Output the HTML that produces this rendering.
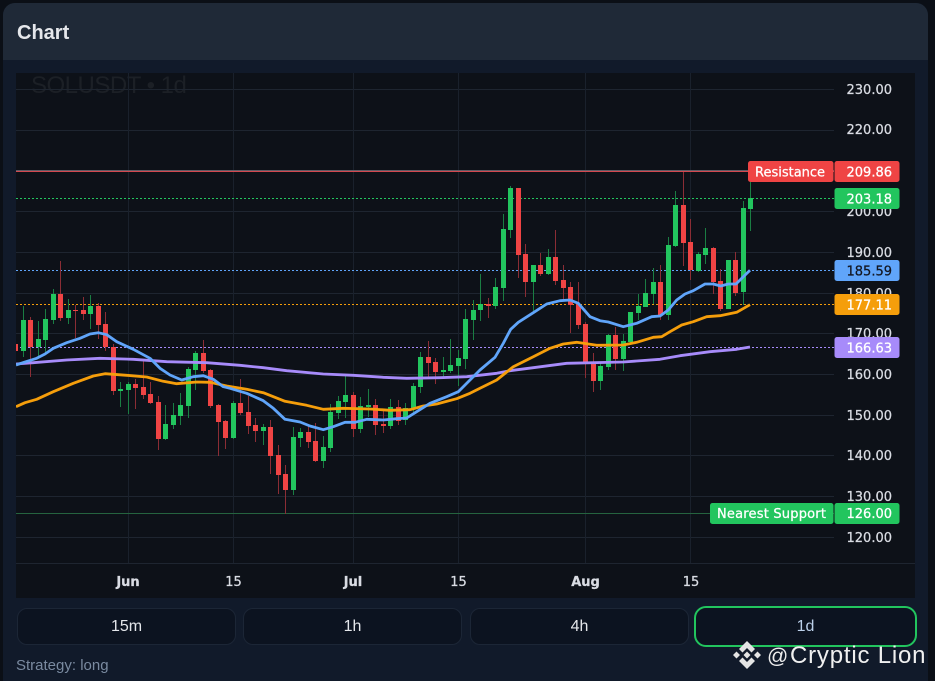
<!DOCTYPE html>
<html><head><meta charset="utf-8"><title>Chart</title>
<style>
html,body{margin:0;padding:0;background:#0b0f16;width:935px;height:681px;overflow:hidden;}
body{position:relative;font-family:"Liberation Sans",sans-serif;}
.card{position:absolute;left:3px;top:3px;width:925px;height:678px;background:#111a2a;border-radius:12px 12px 0 0;overflow:hidden;}
.head{position:absolute;left:0;top:0;width:925px;height:57px;background:#1f2937;}
.title{position:absolute;left:17px;top:23px;font:bold 20px "Liberation Sans",sans-serif;color:#e5e7eb;line-height:20px;}
.chart{position:absolute;left:16px;top:73px;width:899px;height:525px;background:#0d1118;}
.btn{position:absolute;top:608px;height:35px;width:217px;background:#0c1320;border:1px solid #1c2636;border-radius:10px;color:#e5e7eb;font:16px/35px "Liberation Sans",sans-serif;text-align:center;}
.on{top:606px;left:694px;width:219px;height:37px;border:2px solid #22c55e;border-radius:12px;color:#bcd0ea;line-height:37px;}
.strat{position:absolute;left:16px;top:658px;font:15px/16px "Liberation Sans",sans-serif;color:#7a8aa0;}
svg{position:absolute;left:0;top:0;}
svg text{font-family:"DejaVu Sans",sans-serif;font-size:13px;stroke-width:.25px;}
</style></head><body>
<div class="card"><div class="head"></div></div>
<div class="title">Chart</div>
<div class="chart"></div>
<svg width="935" height="681" viewBox="0 0 935 681">
<defs><clipPath id="c"><rect x="16" y="73" width="818" height="490"/></clipPath><clipPath id="w"><rect x="16" y="73" width="400" height="40"/></clipPath></defs>
<text clip-path="url(#w)" x="31" y="93" letter-spacing="-.5" style="font:24px 'Liberation Sans',sans-serif" fill="#1c2026">SOLUSDT • 1d</text>
<g fill="none" stroke="#1e2530" stroke-width="1">
<path d="M16 89.5H834M16 130.5H834M16 211.5H834M16 252.5H834M16 293.5H834M16 333.5H834M16 374.5H834M16 415.5H834M16 455.5H834M16 496.5H834M16 537.5H834"/>
<path stroke="#1a212c" d="M128.5 73V563M233.5 73V563M353.5 73V563M458.5 73V563M585.5 73V563M690.5 73V563"/>
<path d="M16 563.5H915"/>
</g>
<g clip-path="url(#c)" fill="none">
<path stroke="#5f5a63" d="M16 170.5H834"/>
<path stroke="#d2484f" d="M16 171.5H834"/>
<path stroke="#22c55e" stroke-dasharray="2 2" d="M16 198.5H834"/>
<path stroke="#60a5fa" stroke-dasharray="2 2" d="M16 270.5H834"/>
<path stroke="#f59e0b" stroke-dasharray="2 2" d="M16 304.5H834"/>
<path stroke="#a78bfa" stroke-dasharray="2 2" d="M16 347.5H834"/>
<path stroke="#25633f" d="M16 513.5H834"/>
<path stroke="#1a7d43" d="M23.5 306V357M38.5 321V357M45.5 309V353M53.5 289V324M68.5 299V324M90.5 295V329M120.5 382V407M128.5 382V414M165.5 405V440M173.5 403V429M180.5 393V425M188.5 367V418M195.5 351V390M233.5 401V439M263.5 424V445M293.5 427V495M300.5 428V447M323.5 436V468M330.5 404V452M338.5 396V419M345.5 376V418M360.5 397V433M368.5 389V417M390.5 399V429M405.5 403V425M413.5 383V412M420.5 352V393M443.5 357V377M450.5 339V373M458.5 350V386M465.5 309V369M473.5 300V340M480.5 274V321M495.5 278V309M503.5 214V301M510.5 186V238M533.5 265V311M548.5 249V275M600.5 362V390M608.5 334V370M623.5 334V371M630.5 312V343M638.5 294V320M645.5 279V307M653.5 268V304M668.5 237V320M675.5 191V247M698.5 252V272M705.5 228V264M728.5 260V309M743.5 201V305M750.5 182V231"/>
<path stroke="#8b2d35" d="M30.5 317V377M60.5 261V321M75.5 305V338M83.5 297V320M98.5 303V339M105.5 312V351M113.5 344V395M135.5 379V409M143.5 361V399M150.5 382V404M158.5 396V450M203.5 340V373M210.5 369V408M218.5 404V456M225.5 420V449M240.5 379V415M248.5 396V434M255.5 418V442M270.5 420V474M278.5 445V494M285.5 465V514M308.5 426V448M315.5 423V462M353.5 392V437M375.5 399V435M383.5 410V433M398.5 400V425M428.5 341V377M435.5 358V384M488.5 298V318M518.5 188V278M525.5 244V297M540.5 253V276M555.5 230V285M563.5 265V300M570.5 282V333M578.5 282V329M585.5 322V378M593.5 353V392M615.5 327V370M660.5 265V320M683.5 172V266M690.5 219V280M713.5 247V294M720.5 269V311M735.5 252V296"/>
<path stroke="#22c55e" stroke-width="5" d="M23.5 320V351M38.5 339V347M45.5 319V340M53.5 294V320M68.5 310V318M90.5 306V314M120.5 389V391M128.5 384V390M165.5 424V439M173.5 415V425M180.5 405V416M188.5 369V406M195.5 353V370M233.5 403V438M263.5 427V431M293.5 437V490M300.5 432V438M323.5 447V461M330.5 412V448M338.5 401V413M345.5 395V402M360.5 406V429M368.5 405V407M390.5 407V426M405.5 408V420M413.5 386V409M420.5 357V387M443.5 370V372M450.5 365V371M458.5 358V366M465.5 319V359M473.5 310V320M480.5 304V310M495.5 287V306M503.5 229V288M510.5 188V230M533.5 265V282M548.5 257V274M600.5 366V381M608.5 335V367M623.5 341V359M630.5 312V342M638.5 306V313M645.5 293V307M653.5 282V294M668.5 245V315M675.5 205V246M698.5 254V271M705.5 248V255M728.5 260V309M743.5 208V292M750.5 198V209"/>
<path stroke="#ef4444" stroke-width="5" d="M15.5 344V351M30.5 320V347M60.5 294V318M75.5 310V311M83.5 310V314M98.5 306V325M105.5 324V347M113.5 347V391M135.5 384V388M143.5 387V395M150.5 394V403M158.5 402V439M203.5 353V371M210.5 370V406M218.5 405V422M225.5 421V438M240.5 403V413M248.5 412V426M255.5 425V431M270.5 427V456M278.5 455V475M285.5 474V490M308.5 432V442M315.5 441V461M353.5 395V429M375.5 405V425M383.5 424V426M398.5 407V421M428.5 357V363M435.5 362V372M488.5 304V306M518.5 188V255M525.5 254V282M540.5 265V274M555.5 257V281M563.5 280V288M570.5 287V305M578.5 304V325M585.5 324V362M593.5 364V381M615.5 335V359M660.5 282V315M683.5 205V243M690.5 242V270M713.5 248V282M720.5 281V309M735.5 260V293"/>
<path stroke="#a78bfa" stroke-width="2.8" stroke-linejoin="round" d="M16 364L33.3 362.7 66.7 360 100 358.3 133.3 359.3 166.7 361.7 206.7 362.7 240 365.3 263.3 367.7 286.7 370.7 323.3 374 353.3 375.3 383.3 377.3 406.7 378.3 440 377.7 466.7 376.7 496.7 373.3 510 370.7 533.3 367.7 566.7 363.3 623.3 362 660 359.3 680 355.7 710 351.7 736.7 349.3 750 347"/>
<path stroke="#f59e0b" stroke-width="2.8" stroke-linejoin="round" d="M16 406.7L25 402.7 36.7 399.3 53.3 391.7 73.3 383.3 93.3 376 105 373.7 126.7 375.3 146.7 377 163.3 381.3 176.7 383.7 196.7 382 210 382.3 226.7 386 246.7 389.3 263.3 392.7 285 401.3 306.7 405.3 323.3 409.3 343.3 408.3 370 409 390 410.3 410 409.7 423.3 406 436.7 404 456.7 398.7 470 393.3 480 388.3 496.7 380 513.3 366.7 533.3 356.7 550 348.3 563.3 344 576.7 342.3 596.7 345.3 623.3 345 636.7 342.3 653.3 337.3 661.7 336.7 670 331.7 681.7 325 693.3 321.7 706.7 316.7 720 315.7 736.7 312.3 750 304.7"/>
<path stroke="#60a5fa" stroke-width="2.8" stroke-linejoin="round" d="M16 365L24 362.3 36.7 358.3 45 354 53.3 348.3 66.7 342.7 80 338.3 90 334 98.3 332.7 106.7 334.7 116.7 341.7 133.3 349.3 150 358.3 160 368.3 170 375 181.7 380 193.3 376.7 203.3 375.7 213.3 379.3 223.3 386.7 230 388.3 246.7 393.3 263.3 400.7 273.3 408.3 285 419.3 300 422 310 426 323.3 429.7 333.3 426.7 345 422.3 355 422.3 366.7 419.3 383.3 420 396.7 418.7 406.7 418 416.7 411.7 430 403.3 446.7 396.7 458.3 391.7 470 380 480 370 495 357.3 503.3 343.3 510.7 329.3 518.3 322.3 533.3 312.7 546.7 304 560 300.7 570 300 578.3 303.3 590 316.7 600 320.7 608.3 322 623.3 326.7 636.7 323.3 651.7 316.7 660 316 668.3 310 676.7 300 685 294 693.3 290.7 705 284 713.3 284 720.7 286 728.3 284 736 284 743.3 276.7 750 270.3"/>
</g>
<g fill="#d9dce3" stroke="#d9dce3" text-anchor="end">
<text x="892" y="94">230.00</text><text x="892" y="134">220.00</text><text x="892" y="216">200.00</text><text x="892" y="257">190.00</text><text x="892" y="298">180.00</text><text x="892" y="338">170.00</text><text x="892" y="379">160.00</text><text x="892" y="420">150.00</text><text x="892" y="460">140.00</text><text x="892" y="501">130.00</text><text x="892" y="542">120.00</text>
</g>
<g fill="#d9dce3" stroke="#d9dce3" text-anchor="middle">
<text x="128" y="586" font-weight="bold">Jun</text><text x="233.5" y="586">15</text><text x="353" y="586" font-weight="bold">Jul</text><text x="458.5" y="586">15</text><text x="585.5" y="586" font-weight="bold">Aug</text><text x="691" y="586">15</text>
</g>
<rect x="748" y="161" width="85.5" height="21" rx="2.5" fill="#ef4444"/><rect x="834.5" y="161" width="65" height="21" rx="2.5" fill="#ef4444"/>
<rect x="834.5" y="188" width="65" height="21" rx="2.5" fill="#22c55e"/>
<rect x="834.5" y="260" width="65" height="21" rx="2.5" fill="#60a5fa"/>
<rect x="834.5" y="294" width="65" height="21" rx="2.5" fill="#f59e0b"/>
<rect x="834.5" y="337" width="65" height="21" rx="2.5" fill="#a78bfa"/>
<rect x="710" y="503" width="123.5" height="21" rx="2.5" fill="#22c55e"/><rect x="834.5" y="503" width="65" height="21" rx="2.5" fill="#22c55e"/>
<g fill="#fff" stroke="#fff">
<text x="755" y="176.500">Resistance</text><text x="892" y="176.500" text-anchor="end">209.86</text>
<text x="892" y="203.500" text-anchor="end">203.18</text>
<text x="892" y="275.500" text-anchor="end" fill="#131722" stroke="#131722">185.59</text>
<text x="892" y="309.500" text-anchor="end">177.11</text>
<text x="892" y="352.500" text-anchor="end">166.63</text>
<text x="717" y="518" letter-spacing=".2">Nearest Support</text><text x="892" y="518" text-anchor="end">126.00</text>
</g>
</svg>
<div class="btn" style="left:17px">15m</div>
<div class="btn" style="left:243px">1h</div>
<div class="btn" style="left:470px">4h</div>
<div class="btn on">1d</div>
<div class="strat">Strategy: long</div>
<svg width="935" height="681" viewBox="0 0 935 681">
<g fill="#e4e4e4">
<path d="M733 655l3.500-3.500 3.500 3.500-3.500 3.500zM754 655l3.500-3.500 3.500 3.500-3.500 3.500zM743.500 655l3.500-3.500 3.500 3.500-3.500 3.500z"/>
<path d="M747 641l8 8-3.500 3.500-4.500-4.500-4.500 4.500-3.500-3.500zM747 669l8-8-3.500-3.500-4.500 4.500-4.500-4.500-3.500 3.500z"/>
</g>
<text x="767" y="663" style="font:21px 'Liberation Sans',sans-serif" fill="#ececec">@</text>
<text x="790" y="663" letter-spacing=".8" style="font:24px 'Liberation Sans',sans-serif" fill="#f0f0f0">Cryptic Lion</text>
</svg>
</body></html>
